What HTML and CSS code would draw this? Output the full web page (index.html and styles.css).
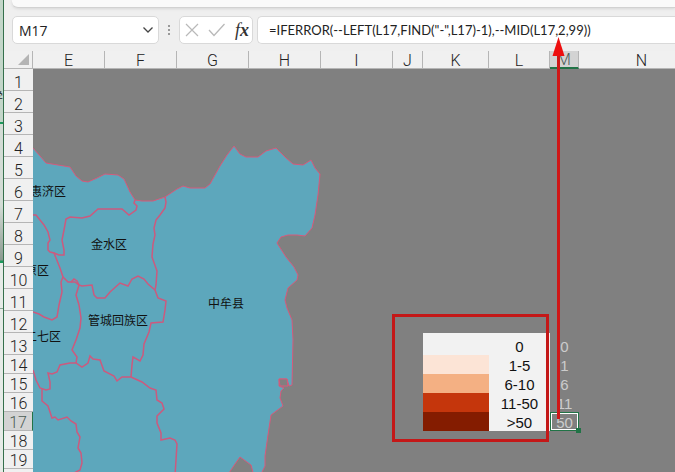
FILE: index.html
```html
<!DOCTYPE html>
<html lang="zh-CN">
<head>
<meta charset="utf-8">
<title>M17</title>
<link rel="stylesheet" href="styles.css">
</head>
<body>
<aside class="behind" aria-hidden="true"><span class="behind-text">学</span></aside>
<main class="app">
  <div class="ribbon"></div>
  <form class="formula-bar">
    <div class="box name-box">
      <input class="name-input" type="text" aria-label="Name box" value="M17">
      <button class="icon-button" type="button" aria-label="Open name list"><svg width="12" height="8" viewBox="0 0 12 8"><path d="M1.5 1.5 6 6l4.500-4.500" fill="none" stroke="#444" stroke-width="1.300"/></svg></button>
    </div>
    <svg class="dots" width="4" height="12" viewBox="0 0 4 12"><path d="M1 1h2v2H1zM1 5h2v2H1zM1 9h2v2H1z" fill="#999"/></svg>
    <div class="box tools">
      <button class="icon-button" type="button" aria-label="Cancel"><svg width="14" height="14" viewBox="0 0 14 14"><path d="M1 1l12 12M13 1 1 13" fill="none" stroke="#b9b9b9" stroke-width="1.200"/></svg></button>
      <button class="icon-button" type="button" aria-label="Enter"><svg width="18" height="14" viewBox="0 0 18 14"><path d="M1 7l5 5.500L16.500 1" fill="none" stroke="#b9b9b9" stroke-width="1.300"/></svg></button>
      <button class="icon-button fx" type="button" aria-label="Insert function">f<b>x</b></button>
    </div>
    <div class="box formula"><input class="formula-input" type="text" aria-label="Formula" value="=IFERROR(--LEFT(L17,FIND(&quot;-&quot;,L17)-1),--MID(L17,2,99))"></div>
  </form>
  <section class="sheet">
    <table class="grid">
      <colgroup><col class="c-head"><col class="c-std"><col class="c-std"><col class="c-std"><col class="c-std"><col class="c-std"><col class="c-j"><col class="c-k"><col class="c-l"><col class="c-m"><col class="c-n"></colgroup>
      <thead><tr><th class="corner"><svg width="11" height="11" viewBox="0 0 11 11"><path d="M11 0v11H0z" fill="#b4b4b4"/></svg></th><th>E</th><th>F</th><th>G</th><th>H</th><th>I</th><th>J</th><th>K</th><th>L</th><th class="active">M</th><th>N</th></tr></thead>
      <tbody>
        <tr><th>1</th><td colspan="10"></td></tr>
        <tr><th>2</th><td colspan="10"></td></tr>
        <tr><th>3</th><td colspan="10"></td></tr>
        <tr><th>4</th><td colspan="10"></td></tr>
        <tr><th>5</th><td colspan="10"></td></tr>
        <tr><th>6</th><td colspan="10"></td></tr>
        <tr><th>7</th><td colspan="10"></td></tr>
        <tr><th>8</th><td colspan="10"></td></tr>
        <tr><th>9</th><td colspan="10"></td></tr>
        <tr><th>10</th><td colspan="10"></td></tr>
        <tr><th>11</th><td colspan="10"></td></tr>
        <tr><th>12</th><td colspan="10"></td></tr>
        <tr><th>13</th><td colspan="6"></td><td class="s0"></td><td class="label">0</td><td class="value">0</td><td></td></tr>
        <tr class="short"><th>14</th><td colspan="6"></td><td class="s1"></td><td class="label">1-5</td><td class="value">1</td><td></td></tr>
        <tr class="short"><th>15</th><td colspan="6"></td><td class="s2"></td><td class="label">6-10</td><td class="value">6</td><td></td></tr>
        <tr class="short"><th>16</th><td colspan="6"></td><td class="s3"></td><td class="label">11-50</td><td class="value">11</td><td></td></tr>
        <tr class="short"><th class="active">17</th><td colspan="6"></td><td class="s4"></td><td class="label">&gt;50</td><td class="value selected">50</td><td></td></tr>
        <tr class="short"><th>18</th><td colspan="10"></td></tr>
        <tr class="short"><th>19</th><td colspan="10"></td></tr>
        <tr class="short"><th></th><td colspan="10"></td></tr>
      </tbody>
    </table>
    <svg class="map" width="300" height="403" viewBox="33 69 300 403">
      <path class="land" d="M30 145 33 148 40 156 46 163 58 165 70 167 76 176 82 181 88 182 97 178 105 174 118 175 124 179 130 192 135 200 142 201 153 201 165 197 177 189 183 186 190 188 205 188 210 184 220 166 227 155 234 146 240 154 246 157 258 157 266 151 276 148 285 157 293 164 303 165 311 160 315 168 320 174 318 195 315 215 312 228 305 236 297 235 288 235 281 237 277 243 286 257 294 267 298 275 297 280 288 288 285 300 287 308 292 320 293 340 292 385 289 386 287 379 279 379 279 386 284 388 281 391 280 398 283 406 271 415 268 435 265 456 265 466 260 476 254 476 251 465 240 457 235 464 227 476 30 476z"/>
      <g class="border">
        <path d="M135 200 134 203 137 206 136 210 129 215 122 209 98 209 90 216 82 218 70 217 66 219 64 230 62 240 64 250 64 255 59 255 54 253"/>
        <path d="M33 215 36 215 40 220 44 225 48 232 50 240 48 243 48 250 50 252 54 253 56 258 60 268 63 277 61 282 62 292 59 305 57 317 52 320 44 317 39 314 33 312"/>
        <path d="M63 277 68 282 75 282 79 285 82 286 92 285 94 295 97 298 105 298 110 292 120 283 128 286 132 279 138 276 144 279 148 284 155 290"/>
        <path d="M71 282 74 279 77 281 79 285"/>
        <path d="M165 197 166 202 165 208 160 215 156 220 154 228 155 235 153 244 152 257 157 271 156 285 155 290 158 298 166 301 165 310 163 322 151 323 149 332 144 344 143 355 140 361 133 357 132 365 131 377"/>
        <path d="M79 285 76 295 79 305 81 318 80 328 76 340 72 350 77 357 76 363"/>
        <path d="M33 370 36 380 40 388 46 390 50 389 50 382 48 373 52 374 57 372 60 365 70 363 76 363 82 367 88 363 90 356 93 359 100 360 104 371 114 376 117 381 122 377 131 377 142 382 150 388 156 390 157 400 162 403 164 409 157 416 157 423 161 433 161 440 170 438 175 440 177 444 175 476"/>
        <path d="M42 389 42 401 48 406 52 418 55 417 58 420 67 417 71 421 76 424 77 432 80 437 78 448 81 453 82 463 80 470 72 474"/>
      </g>
      <path class="island" d="M279 379h8l1 7h-8z"/>
      <g class="place">
        <text x="48" y="196">惠济区</text>
        <text x="109" y="249">金水区</text>
        <text x="37" y="275">原区</text>
        <text x="43" y="341">二七区</text>
        <text x="118" y="325">管城回族区</text>
        <text x="226" y="308">中牟县</text>
      </g>
    </svg>
    <div class="highlight"></div>
    <svg class="arrow" width="15" height="382" viewBox="0 0 15 382"><path d="M7.500 12v370" stroke="#cf1717" stroke-width="3"/><path d="M7.500 0l6 19h-12z" fill="#ee0f0f"/></svg>
  </section>
</main>
</body>
</html>
```

FILE: styles.css
```css
* { box-sizing: border-box; }

body {
  display: flex;
  height: 100vh;
  margin: 0;
  overflow: hidden;
  background: #efefef;
  color: #222;
  font-family: "Noto Sans CJK SC", sans-serif;
}

.behind {
  width: 4px;
  overflow: hidden;
  padding-top: 88px;
  border-right: 1px solid #35704c;
  background: linear-gradient(#c3d6c9 122px, #1c9a5c 122px 124px, #d3dcd5 124px 205px, #8b9a90 260px, #1c9a5c 261px 263px, #e6ebe7 263px 308px, #8aa693 308px 309px, #e6ebe7 309px);
  font-size: 12px;
}

.behind-text {
  float: right;
}

.app {
  display: flex;
  flex: 1;
  flex-direction: column;
  min-width: 0;
}

.ribbon {
  flex: none;
  height: 8px;
  margin-left: 8px;
  border-bottom: 1px solid #d2d2d2;
  border-bottom-left-radius: 6px;
  background: #fafafa;
  box-shadow: 0 1px 3px #d8d8d8;
}

.formula-bar {
  display: flex;
  flex: none;
  align-items: center;
  margin: 8px 0 7px 8px;
}

.box {
  display: flex;
  align-items: center;
  height: 28px;
  border: 1px solid #d9d9d9;
  border-radius: 5px;
  background: #fff;
}

input {
  width: 100%;
  min-width: 0;
  padding: 0;
  border: 0;
  background: none;
  color: #222;
}

.name-box {
  width: 147px;
  padding: 0 4px 0 6px;
}

.name-input {
  font: 14px "Open Sans", sans-serif;
}

.icon-button {
  display: flex;
  flex: none;
  padding: 0;
  border: 0;
  background: none;
}

.dots {
  margin: 0 8px;
}

.tools {
  gap: 9px;
  width: 74px;
  padding-left: 5px;
}

.fx {
  color: #333;
  font: italic 18px "Liberation Serif", serif;
}

.formula {
  flex: 1;
  margin-left: 4px;
  padding-left: 11px;
  border-right: 0;
  border-radius: 5px 0 0 5px;
}

.formula-input {
  font: 13px Lato, sans-serif;
}

.sheet {
  position: relative;
  flex: 1;
  min-height: 0;
  background: #808080;
}

.grid {
  width: 701px;
  border-spacing: 0;
  table-layout: fixed;
}

.c-head { width: 29px; }
.c-std { width: 72px; }
.c-j { width: 30px; }
.c-k { width: 66px; }
.c-l { width: 61px; }
.c-m { width: 29px; }

th,
td {
  height: 22px;
  padding: 0;
  text-align: center;
  vertical-align: bottom;
}

.short th,
.short td {
  height: 19px;
}

th {
  border-bottom: 1px solid #b5b5b5;
  background: #f0f0f0;
  font: 300 16px/14px Roboto, sans-serif;
}

thead th {
  height: 18px;
  border-right: 1px solid #b5b5b5;
}

thead .corner {
  padding: 0 3px 3px 0;
  text-align: right;
  line-height: 0;
}

.active {
  background: #d3d3d3;
  color: #4c5d55;
}

thead .active {
  border-bottom: 2px solid #217346;
}

tbody .active {
  border-right: 1px solid #217346;
}

.label,
.value {
  font: 15px/16px "Liberation Sans", sans-serif;
}

.s0,
.label {
  background: #f2f2f2;
}

.label { color: #111; }
.value { color: #ccc; }
.s1 { background: #fce4d6; }
.s2 { background: #f4b083; }
.s3 { background: #c5360c; }
.s4 { background: #841c00; }

.selected {
  position: relative;
  outline: 1px solid #fff;
  outline-offset: -2px;
  box-shadow: inset 0 0 0 1px #217346;
}

.selected::after {
  position: absolute;
  right: -2px;
  bottom: -2px;
  width: 5px;
  height: 5px;
  background: #217346;
  content: "";
}

.map {
  position: absolute;
  top: 18px;
  left: 29px;
}

.land {
  fill: #5da7bc;
  stroke: #d65a7c;
}

.border {
  fill: none;
  stroke: #cc5a7e;
  stroke-width: 1.5;
}

.island {
  fill: #808080;
  stroke: #d65a7c;
}

.place {
  fill: #111;
  font-size: 12px;
  text-anchor: middle;
}

.highlight {
  position: absolute;
  top: 263px;
  left: 388px;
  width: 157px;
  height: 128px;
  border: 3px solid #c41818;
}

.arrow {
  position: absolute;
  top: -14px;
  left: 547px;
}
```
